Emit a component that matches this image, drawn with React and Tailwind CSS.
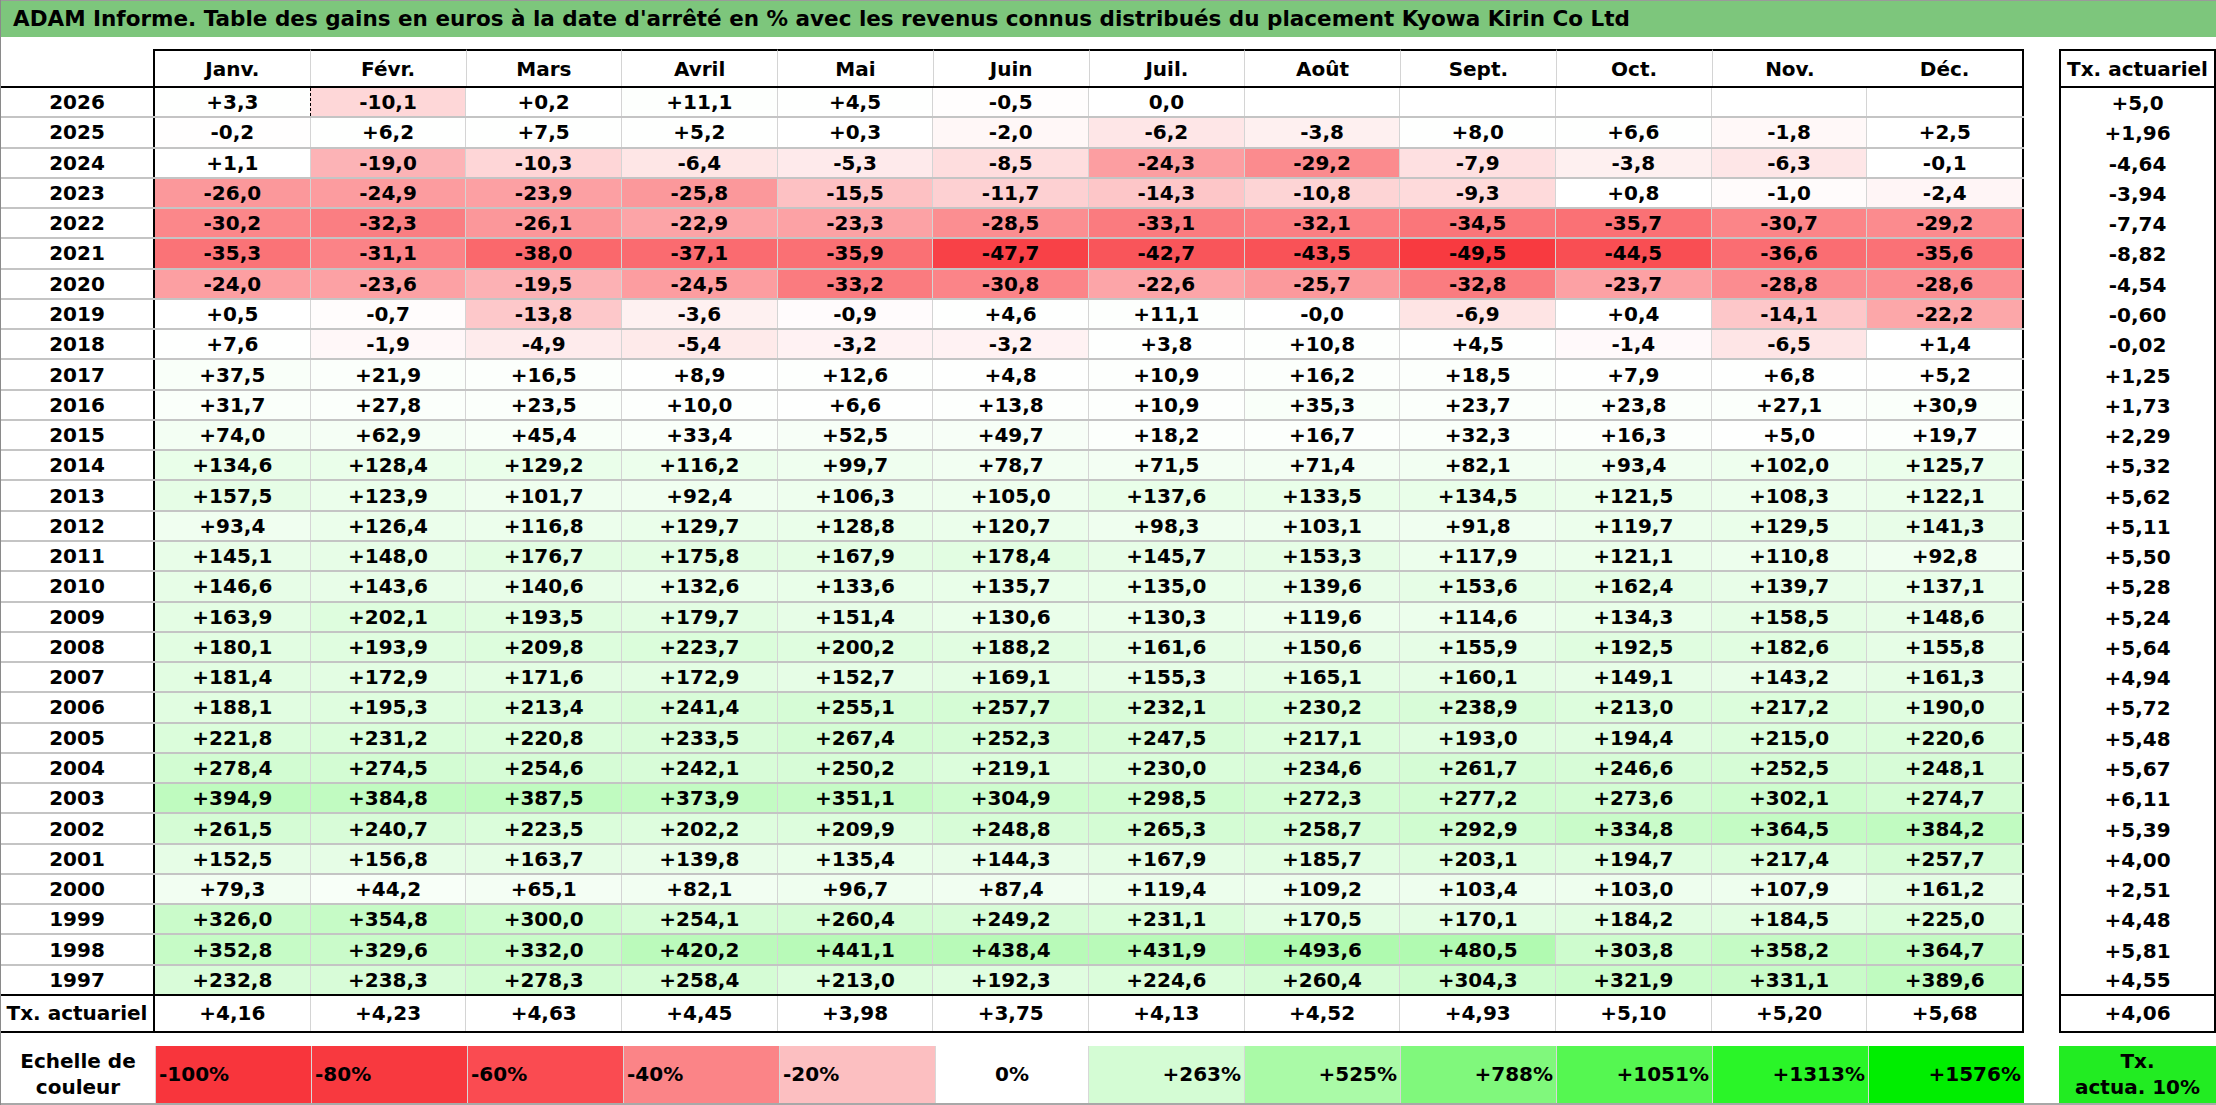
const months = ['Janv.', 'Févr.', 'Mars', 'Avril', 'Mai', 'Juin', 'Juil.', 'Août', 'Sept.', 'Oct.', 'Nov.', 'Déc.'];

const rows = [
  ['2026', '+3,3 -10,1 +0,2 +11,1 +4,5 -0,5 0,0 _ _ _ _ _', '+5,0'],
  ['2025', '-0,2 +6,2 +7,5 +5,2 +0,3 -2,0 -6,2 -3,8 +8,0 +6,6 -1,8 +2,5', '+1,96'],
  ['2024', '+1,1 -19,0 -10,3 -6,4 -5,3 -8,5 -24,3 -29,2 -7,9 -3,8 -6,3 -0,1', '-4,64'],
  ['2023', '-26,0 -24,9 -23,9 -25,8 -15,5 -11,7 -14,3 -10,8 -9,3 +0,8 -1,0 -2,4', '-3,94'],
  ['2022', '-30,2 -32,3 -26,1 -22,9 -23,3 -28,5 -33,1 -32,1 -34,5 -35,7 -30,7 -29,2', '-7,74'],
  ['2021', '-35,3 -31,1 -38,0 -37,1 -35,9 -47,7 -42,7 -43,5 -49,5 -44,5 -36,6 -35,6', '-8,82'],
  ['2020', '-24,0 -23,6 -19,5 -24,5 -33,2 -30,8 -22,6 -25,7 -32,8 -23,7 -28,8 -28,6', '-4,54'],
  ['2019', '+0,5 -0,7 -13,8 -3,6 -0,9 +4,6 +11,1 -0,0 -6,9 +0,4 -14,1 -22,2', '-0,60'],
  ['2018', '+7,6 -1,9 -4,9 -5,4 -3,2 -3,2 +3,8 +10,8 +4,5 -1,4 -6,5 +1,4', '-0,02'],
  ['2017', '+37,5 +21,9 +16,5 +8,9 +12,6 +4,8 +10,9 +16,2 +18,5 +7,9 +6,8 +5,2', '+1,25'],
  ['2016', '+31,7 +27,8 +23,5 +10,0 +6,6 +13,8 +10,9 +35,3 +23,7 +23,8 +27,1 +30,9', '+1,73'],
  ['2015', '+74,0 +62,9 +45,4 +33,4 +52,5 +49,7 +18,2 +16,7 +32,3 +16,3 +5,0 +19,7', '+2,29'],
  ['2014', '+134,6 +128,4 +129,2 +116,2 +99,7 +78,7 +71,5 +71,4 +82,1 +93,4 +102,0 +125,7', '+5,32'],
  ['2013', '+157,5 +123,9 +101,7 +92,4 +106,3 +105,0 +137,6 +133,5 +134,5 +121,5 +108,3 +122,1', '+5,62'],
  ['2012', '+93,4 +126,4 +116,8 +129,7 +128,8 +120,7 +98,3 +103,1 +91,8 +119,7 +129,5 +141,3', '+5,11'],
  ['2011', '+145,1 +148,0 +176,7 +175,8 +167,9 +178,4 +145,7 +153,3 +117,9 +121,1 +110,8 +92,8', '+5,50'],
  ['2010', '+146,6 +143,6 +140,6 +132,6 +133,6 +135,7 +135,0 +139,6 +153,6 +162,4 +139,7 +137,1', '+5,28'],
  ['2009', '+163,9 +202,1 +193,5 +179,7 +151,4 +130,6 +130,3 +119,6 +114,6 +134,3 +158,5 +148,6', '+5,24'],
  ['2008', '+180,1 +193,9 +209,8 +223,7 +200,2 +188,2 +161,6 +150,6 +155,9 +192,5 +182,6 +155,8', '+5,64'],
  ['2007', '+181,4 +172,9 +171,6 +172,9 +152,7 +169,1 +155,3 +165,1 +160,1 +149,1 +143,2 +161,3', '+4,94'],
  ['2006', '+188,1 +195,3 +213,4 +241,4 +255,1 +257,7 +232,1 +230,2 +238,9 +213,0 +217,2 +190,0', '+5,72'],
  ['2005', '+221,8 +231,2 +220,8 +233,5 +267,4 +252,3 +247,5 +217,1 +193,0 +194,4 +215,0 +220,6', '+5,48'],
  ['2004', '+278,4 +274,5 +254,6 +242,1 +250,2 +219,1 +230,0 +234,6 +261,7 +246,6 +252,5 +248,1', '+5,67'],
  ['2003', '+394,9 +384,8 +387,5 +373,9 +351,1 +304,9 +298,5 +272,3 +277,2 +273,6 +302,1 +274,7', '+6,11'],
  ['2002', '+261,5 +240,7 +223,5 +202,2 +209,9 +248,8 +265,3 +258,7 +292,9 +334,8 +364,5 +384,2', '+5,39'],
  ['2001', '+152,5 +156,8 +163,7 +139,8 +135,4 +144,3 +167,9 +185,7 +203,1 +194,7 +217,4 +257,7', '+4,00'],
  ['2000', '+79,3 +44,2 +65,1 +82,1 +96,7 +87,4 +119,4 +109,2 +103,4 +103,0 +107,9 +161,2', '+2,51'],
  ['1999', '+326,0 +354,8 +300,0 +254,1 +260,4 +249,2 +231,1 +170,5 +170,1 +184,2 +184,5 +225,0', '+4,48'],
  ['1998', '+352,8 +329,6 +332,0 +420,2 +441,1 +438,4 +431,9 +493,6 +480,5 +303,8 +358,2 +364,7', '+5,81'],
  ['1997', '+232,8 +238,3 +278,3 +258,4 +213,0 +192,3 +224,6 +260,4 +304,3 +321,9 +331,1 +389,6', '+4,55'],
];

const totals = ['+4,16', '+4,23', '+4,63', '+4,45', '+3,98', '+3,75', '+4,13', '+4,52', '+4,93', '+5,10', '+5,20', '+5,68'];

const legend = [
  ['-100%', '#f8353c', 'left'],
  ['-80%', '#f8393f', 'left'],
  ['-60%', '#fa4b51', 'left'],
  ['-40%', '#fb8487', 'left'],
  ['-20%', '#fcbfc1', 'left'],
  ['0%', '#ffffff', 'center'],
  ['+263%', '#d4fcd4', 'right'],
  ['+525%', '#aafaa7', 'right'],
  ['+788%', '#80f87c', 'right'],
  ['+1051%', '#55f751', 'right'],
  ['+1313%', '#2af528', 'right'],
  ['+1576%', '#00ee00', 'right'],
];

// colour scale: red for losses (saturates at -50), green for gains (max 1576)
function cellColor(s) {
  if (s === '_') return '#ffffff';
  const v = parseFloat(s.replace(',', '.'));
  if (v < 0) {
    const t = Math.min(1, -v / 50);
    return `rgb(${Math.round(255 - 7 * t)}, ${Math.round(255 - 199 * t)}, ${Math.round(255 - 193 * t)})`;
  }
  const t = Math.min(1, v / 1576);
  return `rgb(${Math.round(255 - 255 * t)}, ${Math.round(255 - 17 * t)}, ${Math.round(255 - 255 * t)})`;
}

function MonthsTable() {
  return (
    <div className="w-[2024px] flex flex-col">
      <div className="flex h-[39px] border-b-2 border-black">
        <div className="w-[154px] border-r-2 border-black" />
        {months.map((m, i) => (
          <div
            key={m}
            className={
              i === 11
                ? 'flex-1 flex items-center justify-center border-t-2 border-r-2 border-black'
                : i === 0
                ? 'flex-1 flex items-center justify-center border-t-2 border-black'
                : 'flex-1 flex items-center justify-center border-t-2 border-t-black border-l border-l-[#d4d4d4]'
            }
          >
            {m}
          </div>
        ))}
      </div>

      {rows.map(([year, vals], r) => {
        const cells = vals.split(' ');
        return (
          <div
            key={year}
            className={
              r === rows.length - 1
                ? 'flex h-[30.27px] border-b-2 border-black'
                : 'flex h-[30.27px] border-b-2 border-[#c4c4c4]'
            }
          >
            <div className="w-[154px] flex items-center justify-center border-r-2 border-black">{year}</div>
            {cells.map((c, i) => (
              <div
                key={i}
                style={{ backgroundColor: cellColor(c) }}
                className={
                  i === 11
                    ? 'flex-1 flex items-center justify-center border-l border-[#d4d4d4] border-r-2 border-r-black'
                    : i === 0
                    ? 'flex-1 flex items-center justify-center'
                    : r === 0 && i === 1
                    ? 'flex-1 flex items-center justify-center border-l border-dashed border-black'
                    : 'flex-1 flex items-center justify-center border-l border-[#d4d4d4]'
                }
              >
                {c === '_' ? '' : c}
              </div>
            ))}
          </div>
        );
      })}

      <div className="flex h-[37px] border-b-2 border-black">
        <div className="w-[154px] flex items-center justify-center border-r-2 border-black">Tx. actuariel</div>
        {totals.map((t, i) => (
          <div
            key={i}
            className={
              i === 11
                ? 'flex-1 flex items-center justify-center border-l border-[#d4d4d4] border-r-2 border-r-black'
                : i === 0
                ? 'flex-1 flex items-center justify-center'
                : 'flex-1 flex items-center justify-center border-l border-[#d4d4d4]'
            }
          >
            {t}
          </div>
        ))}
      </div>
    </div>
  );
}

function RateColumn() {
  return (
    <div className="w-[157px] flex flex-col border-x-2 border-black">
      <div className="h-[39px] flex items-center justify-center border-y-2 border-black">Tx. actuariel</div>
      {rows.map(([year, , tx], r) => (
        <div
          key={year}
          className={
            r === rows.length - 1
              ? 'h-[30.27px] flex items-center justify-center border-b-2 border-black'
              : 'h-[30.27px] flex items-center justify-center'
          }
        >
          {tx}
        </div>
      ))}
      <div className="h-[37px] flex items-center justify-center border-b-2 border-black">+4,06</div>
    </div>
  );
}

export default function App() {
  return (
    <div className="w-[2216px] h-[1105px] bg-white text-black font-['DejaVu_Sans',sans-serif] font-bold text-[20px] border-l border-[#8a8a8a] overflow-hidden">
      <div className="h-[37px] bg-[#7dc67c] border-t border-[#9a9a9a] flex items-center pl-[12px] whitespace-nowrap text-[21.5px]">
        ADAM Informe. Table des gains en euros à la date d'arrêté en % avec les revenus connus distribués du placement Kyowa Kirin Co Ltd
      </div>

      <div className="flex gap-[35px] mt-[12px]">
        <MonthsTable />
        <RateColumn />
      </div>

      <div className="flex gap-[35px] mt-[13px] h-[59px] border-b-2 border-[#a8a8a8]">
        <div className="w-[2024px] flex">
          <div className="w-[154px] flex items-center justify-center text-center leading-[26px]">
            Echelle de
            <br />
            couleur
          </div>
          {legend.map(([label, color, align]) => (
            <div
              key={label}
              style={{ backgroundColor: color }}
              className={
                align === 'left'
                  ? 'flex-1 flex items-center justify-start pl-[3px] border-l border-[#d8d8d8]'
                  : align === 'center'
                  ? 'flex-1 flex items-center justify-center border-l border-[#d8d8d8]'
                  : 'flex-1 flex items-center justify-end pr-[3px] border-l border-[#d8d8d8]'
              }
            >
              {label}
            </div>
          ))}
        </div>
        <div className="w-[157px] bg-[#22ec22] flex items-center justify-center text-center leading-[26px]">
          Tx.
          <br />
          actua. 10%
        </div>
      </div>
    </div>
  );
}
